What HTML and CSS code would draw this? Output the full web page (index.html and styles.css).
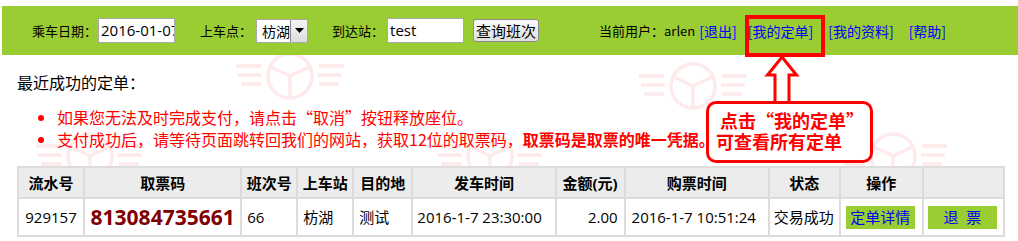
FILE: index.html
```html
<!DOCTYPE html>
<html lang="zh-CN">
<head>
<meta charset="utf-8">
<title>最近成功的定单</title>
<link rel="stylesheet" href="styles.css">
</head>
<body>
<div class="page">
  <svg class="watermark" width="1018" height="241" viewBox="0 0 1018 241" aria-hidden="true">
    <defs>
      <g id="logo" fill="none" stroke="#fdeaea" stroke-width="3.5" stroke-linecap="butt">
        <circle cx="0" cy="0" r="22"/>
        <path d="M0 0L-19 -9M0 0L19 -9M0 0L0 21"/>
        <path d="M-54 -10H-29M-52 -1H-28M-49 8H-29"/>
        <path d="M29 -10H54M28 -1H52M29 8H49"/>
      </g>
    </defs>
    <use href="#logo" x="290" y="-14"/>
    <use href="#logo" x="690" y="-14"/>
    <use href="#logo" x="290" y="70"/>
    <use href="#logo" x="693" y="80"/>
    <use href="#logo" x="90" y="150"/>
    <use href="#logo" x="490" y="150"/>
    <use href="#logo" x="893" y="150"/>
  </svg>

  <div class="bar">
    <span class="lbl">乘车日期：</span>
    <span class="field date">2016-01-07</span>
    <span class="lbl gap1">上车点：</span>
    <span class="select"><span class="sel-text">枋湖</span><span class="sel-btn"><svg width="9" height="5" viewBox="0 0 9 5"><path d="M0 0h9L4.5 5z" fill="#000"/></svg></span></span>
    <span class="lbl gap2">到达站：</span>
    <span class="field dest">test</span>
    <span class="btn-query">查询班次</span>
    <span class="user">当前用户：arlen</span>
    <a class="lnk l1">[退出]</a>
    <a class="lnk l2">[我的定单]</a>
    <a class="lnk l3">[我的资料]</a>
    <a class="lnk l4">[帮助]</a>
  </div>

  <div class="content">
    <div class="title">最近成功的定单：</div>
    <ul class="notes">
      <li>如果您无法及时完成支付，请点击“取消”按钮释放座位。</li>
      <li>支付成功后，请等待页面跳转回我们的网站，获取12位的取票码，<b>取票码是取票的唯一凭据。</b></li>
    </ul>

    <table class="orders">
      <thead>
        <tr>
          <th class="c1">流水号</th>
          <th class="c2">取票码</th>
          <th class="c3">班次号</th>
          <th class="c4">上车站</th>
          <th class="c5">目的地</th>
          <th class="c6">发车时间</th>
          <th class="c7">金额(元)</th>
          <th class="c8">购票时间</th>
          <th class="c9">状态</th>
          <th class="c10">操作</th>
          <th class="c11"></th>
        </tr>
      </thead>
      <tbody>
        <tr>
          <td class="center">929157</td>
          <td class="center code">813084735661</td>
          <td>66</td>
          <td>枋湖</td>
          <td>测试</td>
          <td class="t6">2016-1-7 23:30:00</td>
          <td class="right">2.00</td>
          <td class="t8">2016-1-7 10:51:24</td>
          <td class="t9">交易成功</td>
          <td class="op"><span class="gbtn">定单详情</span></td>
          <td class="op2"><span class="gbtn refund">退&nbsp;&nbsp;票</span></td>
        </tr>
      </tbody>
    </table>
  </div>

  <div class="mark-box"></div>
  <svg class="arrow" width="40" height="50" viewBox="0 0 40 50">
    <polygon points="20,2 34.5,20 27,20 27,48 13,48 13,20 5.5,20" fill="#fff" stroke="#f00" stroke-width="3" stroke-linejoin="miter"/>
  </svg>
  <div class="callout">
    <div class="co1">&nbsp;点击“我的定单”</div>
    <div class="co2">可查看所有定单</div>
  </div>
</div>
</body>
</html>
```

FILE: styles.css
```css
* { box-sizing: border-box; }
html { margin: 0; padding: 0; background: #fff; }
body {
  margin: 0;
  padding: 0;
  font-family: "Open Sans", "Noto Sans CJK SC", sans-serif;
  color: #000;
  width: 1018px;
  height: 241px;
  overflow: hidden;
}
.page { position: relative; z-index: 0; width: 1018px; height: 241px; }
.watermark { position: absolute; left: 0; top: 0; z-index: -1; }

.bar {
  margin: 6px 0 0 2px;
  height: 49px;
  background: #9acd32;
  display: flex;
  align-items: center;
  padding-left: 30px;
  font-size: 13px;
  line-height: 18px;
  white-space: nowrap;
}
.bar > * { flex: none; }
.lbl { font-family: "Noto Sans CJK SC", sans-serif; }
.field {
  display: inline-block;
  height: 25px;
  background: #fff;
  border: 1px solid #a9a9a9;
  font-size: 15px;
  line-height: 23px;
  padding-left: 2px;
  overflow: hidden;
}
.date { width: 77px; margin-left: 1px; }
.gap1 { margin-left: 25px; }
.select {
  display: inline-flex;
  height: 24px;
  width: 52px;
  margin-left: 4px;
  background: #fff;
  border: 1px solid #a9a9a9;
}
.sel-text {
  flex: 1;
  font-family: "Noto Sans CJK SC", sans-serif;
  font-size: 14px;
  line-height: 22px;
  padding-left: 5px;
  overflow: hidden;
}
.sel-btn {
  flex: none;
  width: 17px;
  border-left: 1px solid #8a8a8a;
  background: linear-gradient(#f4f4f4, #dcdcdc);
  display: flex;
  align-items: center;
  justify-content: center;
}
.gap2 { margin-left: 24px; }
.dest { width: 77px; margin-left: 3px; }
.btn-query {
  margin-left: 9px;
  width: 66px;
  height: 23px;
  border: 1px solid #8c8c8c;
  border-radius: 3px;
  background: linear-gradient(#fafafa, #dedede);
  font-family: "Noto Sans CJK SC", sans-serif;
  font-size: 15px;
  line-height: 21px;
  text-align: center;
}
.user { margin-left: 60px; font-family: "Noto Sans CJK SC", sans-serif; }
.lnk { color: #0000ff; font-size: 14px; line-height: 18px; font-family: "Noto Sans CJK SC", sans-serif; }
.l1 { margin-left: 4px; }
.l2 { margin-left: 11px; }
.l3 { margin-left: 15px; }
.l4 { margin-left: 15px; }

.content { padding-left: 17px; }
.title { margin-top: 16px; font-size: 16px; line-height: 22px; font-family: "Noto Sans CJK SC", sans-serif; }
.notes {
  margin: 13px 0 0 0;
  padding-left: 40px;
  color: #ff0000;
  font-family: "Noto Sans CJK SC", sans-serif;
  font-size: 16px;
  line-height: 22px;
}
.notes b { font-weight: bold; }

.orders {
  margin-top: 16px;
  border-collapse: separate;
  border-spacing: 2px;
  background: #dcdcdc;
  table-layout: fixed;
  width: 988px;
  font-size: 15px;
}
.orders th {
  background: #ececec;
  height: 29px;
  font-weight: bold;
  text-align: center;
  padding: 0;
  line-height: 20px;
}
.orders td {
  background: #fff;
  height: 36px;
  padding: 0 5px;
  text-align: left;
  white-space: nowrap;
  line-height: 20px;
}
.c1 { width: 64px; }
.c2 { width: 155px; }
.c3 { width: 54px; }
.c4 { width: 54px; }
.c5 { width: 57px; }
.c6 { width: 141px; }
.c7 { width: 67px; }
.c8 { width: 142px; }
.c9 { width: 69px; }
.c10 { width: 81px; }
.c11 { width: 79px; }
.orders td.center { text-align: center; padding: 0; }
.orders td.right { text-align: right; padding-right: 6px; }
.orders td.t6 { padding-left: 4px; }
.orders td.t8 { padding-left: 6px; }
.orders td.t9 { padding-left: 4px; }
.code { color: #800000; font-weight: bold; font-size: 21px; }
.orders td.op { padding: 0 0 0 5px; }
.orders td.op2 { padding: 0 0 0 4px; }
.gbtn {
  display: inline-block;
  width: 69px;
  height: 23px;
  background: #9acd32;
  color: #0000ff;
  font-size: 15px;
  line-height: 23px;
  text-align: center;
  vertical-align: middle;
}

.mark-box {
  position: absolute;
  left: 745px;
  top: 9px;
  width: 80px;
  height: 42px;
  border: 4px solid #f00;
}
.arrow { position: absolute; left: 762px; top: 49px; }
.callout {
  position: absolute;
  left: 706px;
  top: 95px;
  width: 167px;
  height: 62px;
  border: 3px solid #f00;
  border-radius: 10px;
  background: #fff;
  color: #f00;
  font-family: "Noto Sans CJK SC", sans-serif;
  font-weight: bold;
  font-size: 18px;
  line-height: 21px;
  padding: 6px 0 0 7px;
  white-space: nowrap;
}
```
